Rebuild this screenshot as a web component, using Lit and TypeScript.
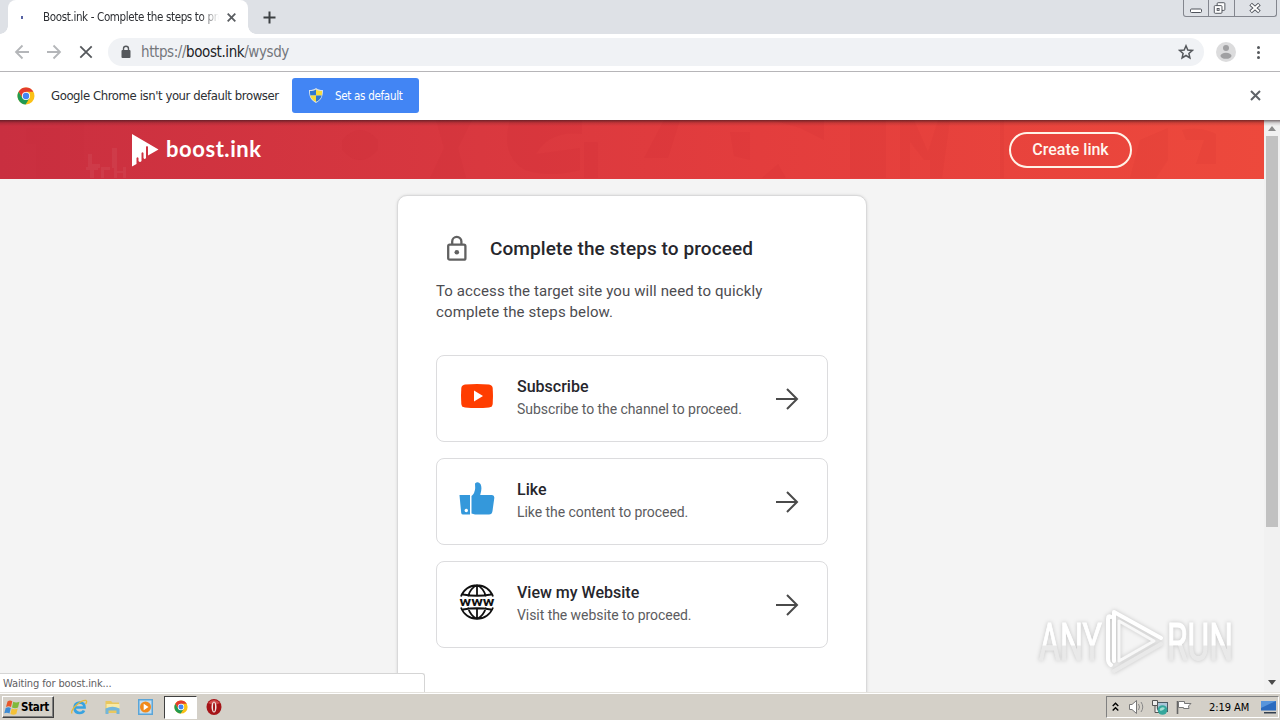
import { LitElement, html, css, svg } from 'lit';
import { customElement, property } from 'lit/decorators.js';

const chromeLogo = svg`
  <circle cx="9" cy="9" r="8.5" fill="#fbc116"/>
  <path d="M9 4.8 H16.4 A8.5 8.5 0 0 0 9 .5 A8.5 8.5 0 0 0 1.6 4.8 L5.4 11 Z" fill="#e33b2e"/>
  <path d="M1.6 4.8 A8.5 8.5 0 0 0 8.6 17.5 L12.6 11.1 L9 9 L5.4 11.1 Z" fill="#219a52"/>
  <circle cx="9" cy="9" r="4.1" fill="#fff"/>
  <circle cx="9" cy="9" r="3.2" fill="#4285f4"/>
`;

const shield = svg`
  <path d="M7 0 C9 1.6 11 2 14 2 C14 8 12.5 12 7 15 C1.5 12 0 8 0 2 C3 2 5 1.6 7 0Z" fill="#d9e2e8"/>
  <path d="M7 1.4 V7.5 H1.3 C1 6 1 4.5 1 3 C3.4 3 5.2 2.6 7 1.4Z" fill="#2f77d0"/>
  <path d="M7 1.4 V7.5 H12.7 C13 6 13 4.5 13 3 C10.6 3 8.8 2.6 7 1.4Z" fill="#f6dc3c"/>
  <path d="M7 13.8 V7.5 H1.3 C2 10.5 4 12.5 7 13.8Z" fill="#f6dc3c"/>
  <path d="M7 13.8 V7.5 H12.7 C12 10.5 10 12.5 7 13.8Z" fill="#2f77d0"/>
`;

@customElement('browser-frame')
export class BrowserFrame extends LitElement {

    static styles = css`
    :host {
        display: block;
        flex: none;
        font-family: "DejaVu Sans Condensed", "DejaVu Sans", sans-serif;
        color: #2d2f33;
    }
    * {
        box-sizing: border-box;
    }
    svg {
        display: block;
        flex: none;
    }
    .strip {
        display: flex;
        height: 34px;
        padding-left: 8px;
        background: #dee1e6;
    }
    .tab {
        position: relative;
        display: flex;
        align-items: center;
        width: 240px;
        height: 34px;
        padding-left: 13px;
        background: #fff;
        border-radius: 8px 8px 0 0;
    }
    .tab::before,
    .tab::after {
        content: '';
        position: absolute;
        bottom: 0;
        width: 8px;
        height: 8px;
    }
    .tab::before {
        left: -8px;
        background: radial-gradient(circle at 0 0, transparent 7.5px, #fff 8px);
    }
    .tab::after {
        right: -8px;
        background: radial-gradient(circle at 100% 0, transparent 7.5px, #fff 8px);
    }
    .spinner {
        width: 2px;
        height: 3px;
        margin-right: 20px;
        background: #5763a3;
    }
    .title {
        width: 176px;
        margin-right: 8px;
        overflow: hidden;
        white-space: nowrap;
        font-size: 11.5px;
        letter-spacing: -.35px;
        mask-image: linear-gradient(90deg, #000 158px, transparent 176px);
    }
    .plus {
        margin: 11px auto 0 15px;
    }
    .window-buttons {
        display: flex;
        height: 17px;
        margin-right: 3px;
        border: 1px solid #83868e;
        border-top: 0;
        border-radius: 0 0 3px 3px;
    }
    .window-buttons svg + svg {
        border-left: 1px solid #83868e;
    }
    .toolbar {
        display: flex;
        align-items: center;
        height: 38px;
        padding: 0 12px 2px 14px;
        background: #fff;
        border-bottom: 1px solid #b6b5b8;
    }
    .nav {
        display: flex;
        gap: 16px;
        margin-right: 14px;
    }
    .omnibox {
        display: flex;
        align-items: center;
        width: 1096px;
        height: 28px;
        padding: 0 10px 0 12px;
        border-radius: 14px;
        background: #f0f2f5;
    }
    .url {
        flex: 1;
        margin-left: 9px;
        font-size: 15px;
        letter-spacing: -.41px;
        color: #74777c;
    }
    .url b {
        font-weight: 400;
        color: #202124;
    }
    .avatar {
        margin: 0 12px;
    }
    .infobar {
        display: flex;
        align-items: center;
        height: 48px;
        padding: 0 19px 1px 17px;
        background: #fff;
    }
    .message {
        margin: 0 13px 0 16px;
        width: 228px;
        white-space: nowrap;
        font-size: 13px;
        letter-spacing: -.42px;
    }
    .default {
        display: flex;
        align-items: center;
        gap: 12px;
        width: 127px;
        height: 35px;
        margin-right: auto;
        padding-left: 17px;
        border-radius: 3px;
        background: #4285f4;
        color: #fff;
        font-size: 11.5px;
        letter-spacing: -.3px;
        white-space: nowrap;
    }
    `;

    render() {
        return html`
        <div class="strip">
            <div class="tab">
                <span class="spinner"></span>
                <span class="title">Boost.ink - Complete the steps to pro</span>
                <svg width="9" height="9" viewBox="0 0 9 9" stroke="#5a5d61" stroke-width="1.8"><path d="M.7 .7 L8.3 8.3 M8.3 .7 L.7 8.3"/></svg>
            </div>
            <svg class="plus" width="13" height="13" viewBox="0 0 13 13" stroke="#3c4043" stroke-width="2"><path d="M6.5 .5 V12.5 M.5 6.5 H12.5"/></svg>
            <div class="window-buttons">
                <svg width="24" height="16" viewBox="0 0 24 16"><rect x="6.5" y="9" width="11" height="3.5" rx="1" fill="#fff" stroke="#4f535b"/></svg>
                <svg width="26" height="16" viewBox="0 0 26 16" fill="#fff" stroke="#4f535b"><rect x="8.5" y="2.500" width="8" height="8" rx="1"/><rect x="5.5" y="5.5" width="8" height="8" rx="1"/><rect x="8.5" y="8.5" width="2" height="2"/></svg>
                <svg width="42" height="16" viewBox="0 0 42 16"><path d="M16 4 L25 12 M25 4 L16 12" stroke="#4f535b" stroke-width="4"/><path d="M16.500 4.500 L24.500 11.500 M24.500 4.500 L16.500 11.500" stroke="#fff" stroke-width="2"/></svg>
            </div>
        </div>
        <div class="toolbar">
            <div class="nav">
                <svg width="16" height="16" viewBox="0 0 16 16" fill="none" stroke="#b4b6b9" stroke-width="1.8"><path d="M15 8 H2 M8.5 1.5 L2 8 L8.5 14.5"/></svg>
                <svg width="16" height="16" viewBox="0 0 16 16" fill="none" stroke="#b4b6b9" stroke-width="1.8"><path d="M1 8 H14 M7.5 1.5 L14 8 L7.5 14.5"/></svg>
                <svg width="16" height="16" viewBox="0 0 16 16" stroke="#55585c" stroke-width="1.8"><path d="M2.3 2.3 L13.7 13.7 M13.7 2.3 L2.3 13.7"/></svg>
            </div>
            <div class="omnibox">
                <svg width="12" height="14" viewBox="0 0 12 14"><rect x="1.5" y="5" width="9" height="8" rx="1" fill="#55585c"/><path d="M3.5 5.5 V3.8 A2.5 2.5 0 0 1 8.5 3.8 V5.5" fill="none" stroke="#55585c" stroke-width="1.4"/></svg>
                <span class="url">https://<b>boost.ink</b>/wysdy</span>
                <svg width="16" height="16" viewBox="0 0 16 16" fill="none" stroke="#55585c" stroke-width="1.5"><path d="M8 1.8 L9.8 6 L14.3 6.4 L10.9 9.4 L11.9 13.9 L8 11.5 L4.1 13.9 L5.1 9.4 L1.7 6.4 L6.2 6 Z"/></svg>
            </div>
            <svg class="avatar" width="20" height="20" viewBox="0 0 20 20"><circle cx="10" cy="10" r="10" fill="#dcdcdd"/><circle cx="10" cy="6" r="3" fill="#a0a0a2"/><ellipse cx="10" cy="13.8" rx="5.5" ry="3" fill="#a0a0a2"/></svg>
            <svg width="16" height="16" viewBox="0 0 16 16" fill="#55585c"><circle cx="10.5" cy="3.500" r="1.5"/><circle cx="10.5" cy="8.500" r="1.5"/><circle cx="10.5" cy="13.500" r="1.5"/></svg>
        </div>
        <div class="infobar">
            <svg width="18" height="18" viewBox="0 0 18 18">${chromeLogo}</svg>
            <span class="message">Google Chrome isn't your default browser</span>
            <div class="default">
                <svg width="14" height="15" viewBox="0 0 14 15">${shield}</svg>
                <span>Set as default</span>
            </div>
            <svg width="11" height="11" viewBox="0 0 11 11" stroke="#5f6368" stroke-width="2"><path d="M1 1 L10 10 M10 1 L1 10"/></svg>
        </div>
        `;
    }
}

@customElement('step-card')
export class StepCard extends LitElement {

    @property() heading = '';
    @property() text = '';

    static styles = css`
    :host {
        display: flex;
        align-items: center;
        box-sizing: border-box;
        height: 87px;
        padding: 0 28px 0 22px;
        border: 1px solid #dcdcde;
        border-radius: 8px;
    }
    .icon {
        width: 36px;
        height: 44px;
    }
    .copy {
        flex: 1;
        margin-left: 22px;
        padding-bottom: 2px;
    }
    .heading {
        font-size: 16px;
        font-weight: 500;
        line-height: 22px;
        color: #26262c;
    }
    .text {
        font-size: 14px;
        line-height: 22px;
        letter-spacing: -.06px;
        color: #5c5c60;
        white-space: nowrap;
    }
    `;

    render() {
        return html`
        <div class="icon"><slot></slot></div>
        <div class="copy">
            <div class="heading">${this.heading}</div>
            <div class="text">${this.text}</div>
        </div>
        <svg width="24" height="24" viewBox="0 0 24 24" fill="none" stroke="#4a4a4a" stroke-width="2"><path d="M1 12 H22 M12 2 L22 12 L12 22"/></svg>
        `;
    }
}

@customElement('boost-page')
export class BoostPage extends LitElement {

    static styles = css`
    :host {
        position: relative;
        display: flex;
        flex: 1;
        min-height: 0;
        overflow: hidden;
        background: #f4f4f4;
        font-family: Roboto, sans-serif;
    }
    * {
        box-sizing: border-box;
    }
    svg {
        display: block;
    }
    .shade {
        position: absolute;
        inset: 0 0 auto 0;
        height: 6px;
        background: linear-gradient(rgba(40, 20, 25, .6), rgba(40, 20, 25, .15) 50%, transparent);
    }
    .content {
        flex: 1;
    }
    .header {
        position: relative;
        display: flex;
        align-items: center;
        justify-content: space-between;
        height: 59px;
        padding: 1px 132px 0 131px;
        background: linear-gradient(90deg, #c92f40, #d9383f 38%, #e33d3d 60%, #ed493c);
    }
    .pattern {
        position: absolute;
        inset: 0;
    }
    .brand {
        position: relative;
        display: flex;
        align-items: center;
        gap: 7px;
        color: #fff;
        font: 700 22px Lato, sans-serif;
        letter-spacing: .55px;
    }
    .brand svg {
        margin-top: -1px;
    }
    .brand span {
        padding-bottom: 4px;
    }
    .create {
        position: relative;
        width: 123px;
        height: 36px;
        border: 2px solid #fff3e8;
        border-radius: 18px;
        color: #fff6ee;
        font-size: 16px;
        font-weight: 500;
        line-height: 31px;
        text-align: center;
    }
    .card {
        width: 470px;
        height: 560px;
        margin: 16px auto 0;
        padding: 39px 38px;
        border: 1px solid #d9d9da;
        border-radius: 10px;
        background: #fff;
        box-shadow: 0 0 3px rgba(0, 0, 0, .12);
    }
    .title {
        display: flex;
        align-items: center;
        gap: 22px;
        height: 27px;
        padding-left: 10px;
        color: #26262c;
        font-size: 19px;
        font-weight: 500;
        letter-spacing: .09px;
    }
    .intro {
        margin: 19px 0 32px;
        color: #4c4c50;
        font-size: 15px;
        line-height: 21px;
        letter-spacing: .11px;
    }
    .steps {
        display: grid;
        gap: 16px;
    }
    .scrollbar {
        display: flex;
        flex-direction: column;
        align-items: center;
        width: 16px;
        padding: 6px 0 7px;
        background: #f1f1f1;
    }
    .thumb {
        width: 12px;
        height: 391px;
        margin: 5px 0 auto;
        background: #c1c1c1;
    }
    .status {
        position: absolute;
        left: 0;
        bottom: 0;
        width: 425px;
        height: 19px;
        padding-left: 3px;
        border: 1px solid #d5d5d5;
        border-width: 1px 1px 0 0;
        border-radius: 0 3px 0 0;
        background: #fff;
        color: #5f6063;
        font: 11px/19px "DejaVu Sans Condensed", sans-serif;
        letter-spacing: -.13px;
    }
    .watermark {
        position: absolute;
        left: 1030px;
        top: 483px;
        filter: drop-shadow(0 0 2px rgba(0, 0, 0, .2));
    }
    `;

    render() {
        return html`
        <div class="content">
            <div class="header">
                <svg class="pattern" width="1264" height="58" viewBox="0 0 1264 58" fill="#b81d30" fill-opacity=".07">
                    <path d="M26 8 H60 V58 H36 V24 H26Z M70 0 H84 V40 H70Z" fill-opacity=".04"/>
                    <path d="M88 34 h4 v10 h8 v4 h-12z M112 28 h5 v20 h-5z M86 47 h12 v3 h-4 v8 h-4 v-8 h-4z M101 47 h9 v3 h-6 v8 h-3z M114 47 h3 v4 h6 v-4 h3 v11 h-3 v-5 h-6 v5 h-3z" fill="#fff" fill-opacity=".05"/>
                    <path d="M342 20 Q360 0 378 20 V30 Q360 50 342 30Z M436 0 H472 L458 28 L466 58 H430 L444 28Z"/>
                    <path d="M510 0 H582 V14 Q550 10 536 34 L580 28 V50 Q550 58 525 50 Q500 36 510 0Z M584 22 H598 V58 H584Z M664 0 H680 L668 38 H644Z"/>
                    <path d="M730 12 H750 V40 L734 36Z M772 0 H824 V20 L800 8Z M762 58 L778 44 L786 58Z M850 0 H886 V58 H850Z"/>
                    <path d="M900 58 V0 H914 L928 32 L938 0 H950 L942 58 H930 V40 H924 L910 22 V58Z M1000 0 H1004 V58 H1000Z"/>
                    <path d="M1140 20 L1168 8 V40 L1156 58 H1130Z M1182 10 Q1200 6 1216 14 V20 H1186Z M1204 20 H1216 V44 H1196Z"/>
                </svg>
                <div class="brand">
                    <svg width="28" height="34" viewBox="0 0 28 34"><path d="M1 1 L27.5 16.5 L17 22.5 V14 Q16 12 15 14 V25 Q13.5 27 12.5 25 V20 Q11.5 18.5 10.5 20 V28 Q9 30 7.5 28 V25 Q6.5 23.5 5.5 25 V31 L1 33.5Z" fill="#fff"/></svg>
                    <span>boost.ink</span>
                </div>
                <div class="create">Create link</div>
            </div>
            <div class="card">
                <div class="title">
                    <svg width="22" height="27" viewBox="0 0 22 27"><rect x="2.2" y="9.7" width="17.2" height="15" rx="1.5" fill="none" stroke="#616161" stroke-width="2.3"/><path d="M6.2 9.5 V6.5 A4.6 4.6 0 0 1 15.400 6.5 V9.5" fill="none" stroke="#616161" stroke-width="2.3"/><circle cx="10.800" cy="17.2" r="2.3" fill="#616161"/></svg>
                    <span>Complete the steps to proceed</span>
                </div>
                <div class="intro">To access the target site you will need to quickly<br>complete the steps below.</div>
                <div class="steps">
                    <step-card heading="Subscribe" text="Subscribe to the channel to proceed.">
                        <svg width="36" height="38" viewBox="0 0 36 38"><path d="M6 7.5 Q18 6.3 30 7.5 Q33.4 8 33.7 11 Q34.3 19 33.7 27 Q33.4 30 30 30.5 Q18 31.5 6 30.5 Q2.6 30 2.3 27 Q1.7 19 2.3 11 Q2.6 8 6 7.5Z" fill="#ff3d00"/><path d="M15 13.5 L24 19 L15 24.5Z" fill="#fff"/></svg>
                    </step-card>
                    <step-card heading="Like" text="Like the content to proceed.">
                        <svg width="36" height="38" viewBox="0 0 36 38" fill="#3498db"><path d="M.5 15 H11 V34.5 H4 Q2.5 34.5 2.2 33Z"/><path d="M12.5 16 Q16 13 16.2 8 L16 3.5 Q19 1 21.5 4 Q23.5 8 21.2 15 H33 Q35.5 15 35.3 18 L33.5 31 Q33 34.5 30 34.5 H16 L12.5 33.5Z"/><circle cx="7.3" cy="30.5" r="1.7" fill="#fff"/></svg>
                    </step-card>
                    <step-card heading="View my Website" text="Visit the website to proceed.">
                        <svg width="36" height="38" viewBox="0 0 36 38" fill="none" stroke="#111" stroke-width="1.8">
                            <path d="M2 13.5 A17 17 0 0 1 34 13.5 M2 24.5 A17 17 0 0 0 34 24.5 M18 2 V13.5 M18 24.5 V36 M9 13.5 Q11.5 5 18 2 Q24.5 5 27 13.5 M9 24.5 Q11.5 33 18 36 Q24.5 33 27 24.5 M4 11.500 Q18 14 32 11.500 M4 26.500 Q18 24 32 26.500"/>
                            <text x="0.5" y="22.5" textLength="35" lengthAdjust="spacingAndGlyphs" font-family="Roboto" font-weight="700" font-size="13" fill="#111" stroke="none">www</text>
                        </svg>
                    </step-card>
                </div>
            </div>
        </div>
        <div class="scrollbar">
            <svg width="8" height="5" viewBox="0 0 8 5" fill="#8b8b8b"><path d="M0 5 L4 0 L8 5Z"/></svg>
            <div class="thumb"></div>
            <svg width="8" height="5" viewBox="0 0 8 5" fill="#4b4b4b"><path d="M0 0 H8 L4 5Z"/></svg>
        </div>
        <div class="shade"></div>
        <svg class="watermark" width="220" height="76" viewBox="0 0 220 76">
            <defs><linearGradient id="fade" x1="0" y1="0" x2="0" y2="1"><stop offset=".54" stop-color="#fff"/><stop offset=".56" stop-color="#e9e9e9"/></linearGradient></defs>
            <g font-family="Roboto" font-size="52" fill="url(#fade)" stroke="url(#fade)">
                <text x="9" y="57" textLength="63" lengthAdjust="spacingAndGlyphs">ANY</text>
                <text x="137" y="57" textLength="66" lengthAdjust="spacingAndGlyphs">RUN</text>
            </g>
            <g fill="none" stroke="#fff" stroke-width="4" stroke-linejoin="round" stroke-linecap="round">
                <path d="M81 62 Q78 60 78 56 V16 Q78 12 81 14"/>
                <path d="M89 52 V18 L124 38 L89 58Z" stroke="#f8f8f8" stroke-width="3"/>
                <path d="M84 58 V9 L131 35"/>
                <path d="M84 68 L131 41" stroke="#e9e9e9"/>
            </g>
        </svg>
        <div class="status">Waiting for boost.ink...</div>
        `;
    }
}

@customElement('task-bar')
export class TaskBar extends LitElement {

    static styles = css`
    :host {
        display: flex;
        flex: none;
        align-items: center;
        box-sizing: border-box;
        height: 28px;
        padding: 3px 1px 1px 2px;
        background: #d4d0c8;
        box-shadow: inset 0 1px #e4e2dd, inset 0 2px #fff;
        font-family: "DejaVu Sans Condensed", sans-serif;
        color: #000;
    }
    * {
        box-sizing: border-box;
    }
    svg {
        display: block;
        flex: none;
    }
    .start {
        display: flex;
        align-items: center;
        width: 52px;
        height: 22px;
        padding-left: 1px;
        border: 1px solid;
        border-color: #fff #404040 #404040 #fff;
        box-shadow: inset -1px -1px #808080;
        font-size: 11.5px;
        font-weight: 700;
        letter-spacing: -.3px;
    }
    .launch {
        display: flex;
        flex: 1;
        align-items: center;
        padding-left: 16px;
    }
    .launch > svg + svg {
        margin-left: 16px;
    }
    .active {
        display: grid;
        place-items: center;
        width: 33px;
        height: 23px;
        margin: 0 9px 0 10px;
        border: 1px solid;
        border-color: #404040 #fff #fff #404040;
        background: #fff;
    }
    .tray {
        display: flex;
        align-items: center;
        width: 173px;
        height: 22px;
        padding: 0 1px 0 5px;
        border: 1px solid;
        border-color: #808080 #fff #fff #808080;
    }
    .clock {
        width: 42px;
        margin: 0 9px 0 16px;
        font-size: 11px;
        letter-spacing: -.05px;
        white-space: nowrap;
    }
    `;

    render() {
        return html`
        <div class="start">
            <svg width="17" height="17" viewBox="0 0 17 17">
                <path d="M3.5 2.5 Q6 .8 8.3 2.3 L7 8 Q4.5 6.5 2 8Z" fill="#e8572a"/>
                <path d="M9.2 2.8 Q12 4.3 15.5 2.8 L14 8.5 Q11 9.8 8 8.4Z" fill="#80b93a"/>
                <path d="M1.7 9 Q4.5 7.5 6.8 9 L5.5 14.5 Q3 13 .3 14.3Z" fill="#3d8bd4"/>
                <path d="M7.7 9.4 Q10.5 10.8 13.7 9.5 L12.3 15 Q9.5 16.3 6.4 15Z" fill="#f5c136"/>
            </svg>
            <span>Start</span>
        </div>
        <div class="launch">
            <svg width="18" height="18" viewBox="0 0 18 18" fill="none">
                <path d="M4.5 9.5 H14.5 Q14.5 4.5 9.5 4.5 Q4.5 5 4.5 10 Q5 15 9.7 15 Q12.8 15 14 12.5" stroke="#38a3e0" stroke-width="2.7"/>
                <path d="M2 15.5 Q.5 13 6 7.5 Q12 2 16 2.5 Q17.5 3.5 15.5 6" stroke="#e5b93c" stroke-width="1.3"/>
            </svg>
            <svg width="17" height="18" viewBox="0 0 17 18">
                <path d="M1.5 3 H7 L8.5 4.5 H15 V15 H1.5Z" fill="#e9c75f"/><path d="M2.5 6 H15.5 V11 H2.5Z" fill="#f9eaa5"/>
                <path d="M1.5 16 V10.5 Q8.5 7 15.5 10.5 V16 H12.5 V12.5 H4.5 V16Z" fill="#72b6dc"/>
            </svg>
            <svg width="17" height="18" viewBox="0 0 17 18">
                <rect x="1" y="1" width="15" height="16" fill="#5aa5d8"/><rect x="2.5" y="2.5" width="12" height="13" fill="#c4def0"/><circle cx="8.5" cy="9" r="5.5" fill="#f18a1c"/><path d="M6.7 5.8 L11.5 9 L6.7 12.2Z" fill="#fff"/>
            </svg>
            <div class="active"><svg width="14" height="14" viewBox="0 0 18 18">${chromeLogo}</svg></div>
            <svg width="16" height="18" viewBox="0 0 16 18"><ellipse cx="8" cy="9" rx="7.5" ry="8" fill="#a51418"/><path d="M2 5 Q8 -1 14 5 Q8 8 2 5Z" fill="#d04a4a"/><ellipse cx="8" cy="9" rx="2.5" ry="5.5" fill="#f2e8e5"/><ellipse cx="8" cy="9" rx="1" ry="4.5" fill="#a51418"/></svg>
        </div>
        <div class="tray">
            <svg width="7" height="10" viewBox="0 0 7 10" fill="none" stroke="#000" stroke-width="1.4"><path d="M.7 4 L3.5 1.2 L6.3 4 M.7 8.5 L3.5 5.7 L6.3 8.5"/></svg>
            <svg width="32" height="18" viewBox="0 0 32 18"><path d="M10.500 6.5 H13 L17.5 2.5 V15.5 L13 11.5 H10.500Z" fill="#fff" stroke="#777"/><path d="M19.5 6 Q21.5 9 19.5 12 M22 4 Q25.5 9 22 14" fill="none" stroke="#888"/></svg>
            <svg width="18" height="18" viewBox="0 0 18 18"><rect x="6.5" y="4.5" width="10" height="9" fill="#a9c5d8" stroke="#4a5a64"/><path d="M1.5 2.5 H6.5 V7.5 H1.5Z M4 8 V14.5 H8" fill="#eee" stroke="#555"/><circle cx="11.5" cy="12" r="4.8" fill="#35a79c"/><path d="M8.5 11 Q11 8 14 10 Q12 13 9.5 13Z" fill="#a1ded2"/></svg>
            <svg width="24" height="18" viewBox="0 0 24 18"><path d="M8.500 3 V16" stroke="#666" stroke-width="1.6"/><path d="M9.5 3.5 H15.5 V5.5 H22 L19.5 8 L20 10.5 H14.5 V9.5 H9.5Z" fill="#fff" stroke="#777"/></svg>
            <span class="clock">2:19 AM</span>
            <svg width="17" height="16" viewBox="0 0 17 16"><path d="M1 2 H16 V11.5 H1Z" fill="#2b6bbf"/><path d="M1 2 H16 L1 9Z" fill="#5795dc"/><path d="M4 13 H16 V14.5 H4Z" fill="#333f4e"/></svg>
        </div>
        `;
    }
}

@customElement('app-root')
export class AppRoot extends LitElement {

    static styles = css`
    :host {
        display: flex;
        flex-direction: column;
        width: 1280px;
        height: 720px;
        overflow: hidden;
    }
    `;

    render() {
        return html`
        <browser-frame></browser-frame>
        <boost-page></boost-page>
        <task-bar></task-bar>
        `;
    }
}
